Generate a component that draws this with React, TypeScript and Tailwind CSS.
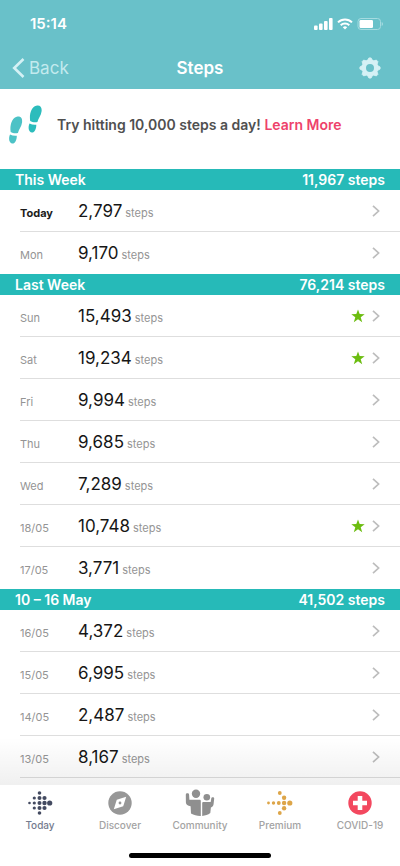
import React from 'react';

type Day = { label: string; steps: string; star?: boolean; today?: boolean };
type Week = { title: string; total: string; days: Day[] };

const WEEKS: Week[] = [
  {
    title: 'This Week',
    total: '11,967 steps',
    days: [
      { label: 'Today', steps: '2,797', today: true },
      { label: 'Mon', steps: '9,170' },
    ],
  },
  {
    title: 'Last Week',
    total: '76,214 steps',
    days: [
      { label: 'Sun', steps: '15,493', star: true },
      { label: 'Sat', steps: '19,234', star: true },
      { label: 'Fri', steps: '9,994' },
      { label: 'Thu', steps: '9,685' },
      { label: 'Wed', steps: '7,289' },
      { label: '18/05', steps: '10,748', star: true },
      { label: '17/05', steps: '3,771' },
    ],
  },
  {
    title: '10 – 16 May',
    total: '41,502 steps',
    days: [
      { label: '16/05', steps: '4,372' },
      { label: '15/05', steps: '6,995' },
      { label: '14/05', steps: '2,487' },
      { label: '13/05', steps: '8,167' },
    ],
  },
];

// [x, y, radius] of each dot, on a 24x24 grid
const TODAY_DOTS = [
  [1.5, 12, 1.3],
  [6.3, 7, 1.6], [6.3, 12, 1.6], [6.3, 17, 1.6],
  [11.5, 2, 1.8], [11.5, 7, 2], [11.5, 12, 2], [11.5, 17, 2], [11.5, 22, 1.8],
  [16.5, 7, 2.1], [16.5, 12, 2.2], [16.5, 17, 2.1],
  [21.7, 12, 2.6],
];

const PREMIUM_DOTS = [
  [0.5, 12, 1.4], [5.5, 12, 1.7], [10.8, 12, 1.9], [16.1, 12, 2.2], [21.8, 12, 2.6],
  [11.8, 2, 1.9], [16.1, 6.7, 2.2], [16.1, 17.3, 2.2], [11.8, 22, 1.9],
];

const Dots: React.FC<{ dots: number[][] }> = ({ dots }) => (
  <svg viewBox="0 0 24 24" className="size-6 overflow-visible" fill="currentColor" aria-hidden="true">
    {dots.map(([x, y, r]) => (
      <circle key={`${x}-${y}`} cx={x} cy={y} r={r} />
    ))}
  </svg>
);

const CompassIcon = () => (
  <svg viewBox="0 0 24 24" className="size-6" aria-hidden="true">
    <circle cx="12" cy="12" r="11.7" fill="#979797" />
    <path d="M18.2 5.8l-3 9.4-9.4 3 3-9.4z" fill="#fff" />
    <circle cx="12" cy="12" r="1.4" fill="#979797" />
  </svg>
);

const PeopleIcon = () => (
  <svg viewBox="0 0 30 28" className="h-7 w-[30px]" fill="#8f8f8f" aria-hidden="true">
    <circle cx="11" cy="4.8" r="4.2" />
    <circle cx="21.8" cy="8.2" r="3.3" />
    <path d="M.8 5.7c0-1.8 3.3-1.8 3.3 0l.3 5H14.5c.8 0 1.3.4 1.3 1.2V27c-3.6.1-6.9-.7-9.8-2.4l-.4-7.3C2.8 17 1 15.8.9 13.6z" />
    <path d="M17.2 14.2c0-.8.5-1.3 1.3-1.3h7.2l.6-3.7c.3-1.5 3.1-1.2 2.9.4l-.6 5.4c-.2 1.7-1.2 2.9-2.7 3.4l-.6 5.6c-2.3 1.7-4.9 2.7-8.1 2.9z" />
  </svg>
);

const CrossIcon = () => (
  <svg viewBox="0 0 24 24" className="size-6" aria-hidden="true">
    <circle cx="12" cy="12" r="11.7" fill="#f3485f" />
    <path d="M9.7 5h4.6v4.7H19v4.6h-4.7V19H9.7v-4.7H5V9.7h4.7z" fill="#fff" />
  </svg>
);

const TABS = [
  { name: 'Today', icon: <Dots dots={TODAY_DOTS} />, color: 'text-[#434a60]', label: 'text-[#747b8e]' },
  { name: 'Discover', icon: <CompassIcon />, color: '', label: 'text-[#a3a3a3]' },
  { name: 'Community', icon: <PeopleIcon />, color: '', label: 'text-[#a3a3a3]' },
  { name: 'Premium', icon: <Dots dots={PREMIUM_DOTS} />, color: 'text-[#dda548]', label: 'text-[#a3a3a3]' },
  { name: 'COVID-19', icon: <CrossIcon />, color: '', label: 'text-[#a3a3a3]' },
];

const StatusIcons = () => (
  <div className="flex items-center gap-1" aria-hidden="true">
    <svg viewBox="0 0 19 12" className="h-3 w-[19px]" fill="#fff">
      <rect x="0" y="7.5" width="3.6" height="4.5" rx="1" />
      <rect x="5" y="5.5" width="3.6" height="6.5" rx="1" />
      <rect x="10" y="3" width="3.6" height="9" rx="1" />
      <rect x="15" y="0" width="3.6" height="12" rx="1" />
    </svg>
    <svg viewBox="0 0 16 12" className="h-3 w-4" fill="none" stroke="#fff" strokeWidth="2">
      <path d="M1 4.4a10 10 0 0 1 14 0" />
      <path d="M3.7 7.3a6.2 6.2 0 0 1 8.6 0" />
      <path d="M8 11.6L5.8 9.3a3.2 3.2 0 0 1 4.4 0z" fill="#fff" stroke="none" />
    </svg>
    <svg viewBox="0 0 27 12" className="h-3 w-[27px]">
      <rect x="1" y="0.5" width="22.5" height="11" rx="3" fill="none" stroke="#a5dbe0" />
      <rect x="2.5" y="2" width="13.5" height="8" rx="1.2" fill="#fff" />
      <path d="M24.7 4v4c1.8-.8 1.8-3.2 0-4z" fill="#a5dbe0" />
    </svg>
  </div>
);

const GearIcon = () => (
  <svg viewBox="0 0 22 22" className="size-[22px]" fill="none" stroke="#d5f1f5" aria-hidden="true">
    <circle cx="11" cy="11" r="6.2" strokeWidth="4.4" />
    {[0, 45, 90, 135, 180, 225, 270, 315].map((a) => (
      <path key={a} d="M8.7 3.2L9.9 .9h2.2l1.2 2.3z" fill="#d5f1f5" strokeWidth="0.8" strokeLinejoin="round" transform={`rotate(${a} 11 11)`} />
    ))}
  </svg>
);

const Shoe = () => (
  <>
    <path d="M8.7 11.8c3.7-1 5.9 1.3 5.4 5.4-.5 4.3-3.2 7-4.2 10.8-2.5.8-5.2.2-7.2-1C1.6 20.5 3.7 13.1 8.7 11.8z" />
    <path d="M2 29.6c2.1 1 4.500 1.400 6.800 1.100.1 4.300-1.800 7.900-4.400 7.800C1.200 38.300.2 33.700 2 29.600z" />
  </>
);

const Footprints = () => (
  <svg viewBox="0 0 34 40" className="h-10 w-[34px] shrink-0" aria-hidden="true">
    <g fill="#4cc2c6"><Shoe /></g>
    <g fill="#2cbcbc" transform="translate(19.5 -11)"><Shoe /></g>
  </svg>
);

const DayRow: React.FC<{ day: Day; last: boolean }> = ({ day, last }) => (
  <li className="pl-5">
    <button type="button" className={`flex h-[42px] w-full items-center pr-5 text-left ${last ? '' : 'border-b border-[#dedede]'}`}>
      <span className="flex flex-1 items-baseline">
        <span className={`w-[58px] text-[11px] ${day.today ? 'font-bold text-[#1c1c1c]' : 'text-[#949494]'}`}>{day.label}</span>
        <span className="text-[17px] leading-6 text-[#161616]">{day.steps}</span>
        <span className="ml-[3px] text-[11px] text-[#949494]">steps</span>
      </span>
      {day.star && (
        <svg viewBox="0 0 14 14" className="mr-[7px] size-[14px]" fill="#6cbd11" role="img" aria-label="Goal reached">
          <path d="M7 .4l1.7 4.7 5 .1-4 3.1 1.5 4.9L7 10.3l-4.2 2.9 1.5-4.9-4-3.1 5-.1z" />
        </svg>
      )}
      <svg viewBox="0 0 8 12" className="h-3 w-2" fill="none" stroke="#bdbdbd" strokeWidth="1.7" aria-hidden="true">
        <path d="M1 .8L6.6 6 1 11.2" />
      </svg>
    </button>
  </li>
);

export default function App() {
  return (
    <div className="flex min-h-screen flex-col bg-white font-['Inter',sans-serif]">
      <header className="bg-[#69c1c9] text-white">
        <div className="flex h-12 items-center justify-between pr-4 pl-[30px]">
          <span className="text-[15px] font-semibold">15:14</span>
          <StatusIcons />
        </div>
        <div className="grid h-[41px] grid-cols-3 items-center px-3 pb-[2px]">
          <button type="button" className="flex items-center gap-1 text-[17px] leading-6 text-[#c3eaee]">
            <svg viewBox="0 0 13 20" className="h-5 w-[13px]" fill="none" stroke="#d5f1f5" strokeWidth="2.6" aria-hidden="true">
              <path d="M11.5 1L2.2 10l9.3 9" />
            </svg>
            Back
          </button>
          <h1 className="text-center text-[17px] leading-6 font-semibold">Steps</h1>
          <button type="button" aria-label="Settings" className="justify-self-end pr-[7px]">
            <GearIcon />
          </button>
        </div>
      </header>

      <main className="relative flex-1 pb-[7px]">
        <div className="flex h-20 items-center gap-[15px] pb-2 pl-2">
          <Footprints />
          <p className="text-sm font-semibold text-[#505050]">
            Try hitting 10,000 steps a day! <a href="#learn" className="text-[#ee426b]">Learn More</a>
          </p>
        </div>
        {WEEKS.map((week, w) => (
          <section key={week.title}>
            <h2 className="flex h-[21px] items-center justify-between bg-[#26bab8] px-[15px] text-sm font-semibold text-white">
              <span>{week.title}</span>
              <span>{week.total}</span>
            </h2>
            <ul>
              {week.days.map((day, i) => (
                <DayRow key={day.label} day={day} last={i === week.days.length - 1 && w < WEEKS.length - 1} />
              ))}
            </ul>
          </section>
        ))}
        {/* Shade above the tab bar */}
        <div className="pointer-events-none absolute inset-x-0 bottom-0 h-12 bg-linear-to-b from-transparent to-black/6" />
      </main>

      <nav className="bg-white">
        <div className="grid grid-cols-5 pt-1">
          {TABS.map((tab) => (
            <button key={tab.name} type="button" className="flex flex-col items-center">
              <span className={`flex h-7 items-center ${tab.color}`}>{tab.icon}</span>
              <span className={`text-[10px] leading-4 font-medium ${tab.label}`}>{tab.name}</span>
            </button>
          ))}
        </div>
        <div className="mx-auto mt-5 mb-2 h-[5px] w-[142px] rounded-full bg-black" />
      </nav>
    </div>
  );
}
